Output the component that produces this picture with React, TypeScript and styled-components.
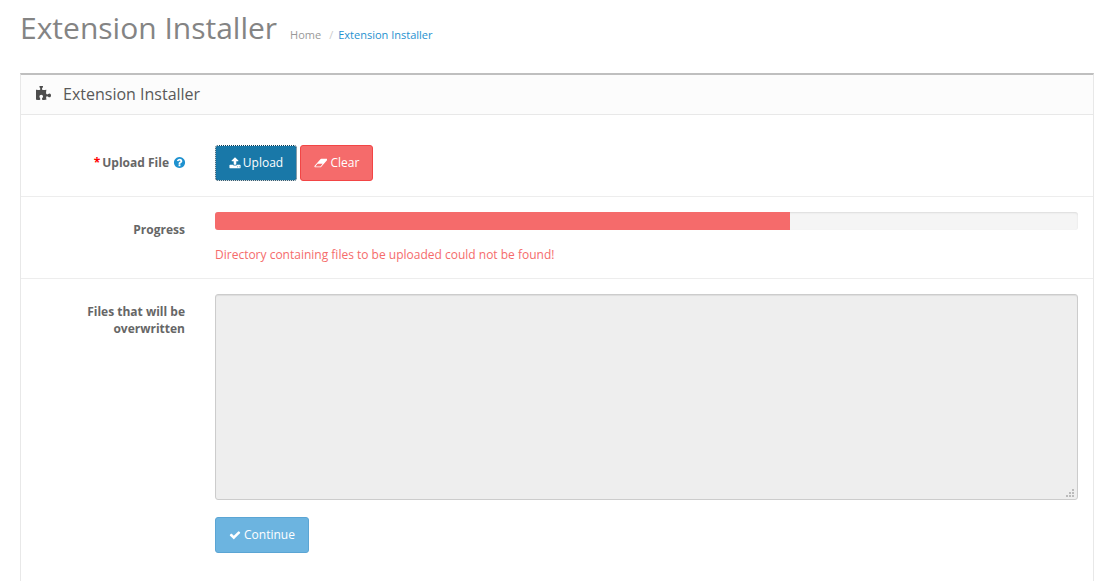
import React from "react";
import styled, { createGlobalStyle } from "styled-components";

const GlobalStyle = createGlobalStyle`
  html, body { margin: 0; padding: 0; background: #fff; overflow: hidden; }
  body {
    font-family: "Open Sans", "Liberation Sans", sans-serif;
    font-size: 12px;
    line-height: 18px;
    color: #666;
  }
`;

const Page = styled.div`
  height: 581px;
  padding: 0 15px 0 20px;
  box-sizing: border-box;
  overflow: hidden;
`;

const PageHeader = styled.div`
  display: flex;
  align-items: baseline;
  height: 73px;
  padding-top: 9px;
  box-sizing: border-box;
`;

const Title = styled.h1`
  margin: 0;
  font-size: 30px;
  line-height: 38px;
  font-weight: 400;
  color: #848484;
`;

const Crumbs = styled.ul`
  display: flex;
  list-style: none;
  margin: 0 0 0 13px;
  padding: 0;
  font-size: 11px;
`;

const Crumb = styled.li<{ $active?: boolean }>`
  color: ${(p) => (p.$active ? "#1e91cf" : "#999")};
`;

const CrumbSlash = styled.li`
  color: #ccc;
  padding: 0 5px 0 8px;
`;

const Panel = styled.section`
  border: 1px solid #e8e8e8;
  border-top: 2px solid #bfbfbf;
  border-bottom: 0;
  height: 508px;
  box-sizing: border-box;
`;

const PanelHeading = styled.div`
  display: flex;
  align-items: center;
  gap: 12px;
  height: 37px;
  padding: 0 0 2px 15px;
  background: #fcfcfc;
  border-bottom: 1px solid #e8e8e8;
`;

const PanelTitle = styled.h3`
  margin: 0;
  font-size: 16px;
  font-weight: 400;
  color: #595959;
`;

const PuzzleIcon = styled.svg`
  width: 15px;
  height: 15px;
  fill: #4d4d4d;
`;

const FormRow = styled.div<{ $top: number; $bottom: number; $divider?: boolean }>`
  display: grid;
  grid-template-columns: 164px 863px;
  column-gap: 30px;
  padding: ${(p) => `${p.$top}px 0 ${p.$bottom}px`};
  border-bottom: ${(p) => (p.$divider ? "1px solid #ededed" : "0")};
`;

const Label = styled.label<{ $pad: number }>`
  padding-top: ${(p) => p.$pad}px;
  text-align: right;
  font-weight: 700;
  line-height: 17px;
  color: #666;
`;

const Required = styled.span`
  color: #f00;
  margin-right: 2px;
`;

const HelpIcon = styled.svg`
  width: 13px;
  height: 13px;
  margin: 0 -1px 0 4px;
  fill: #1e91cf;
  vertical-align: -2px;
`;

const Buttons = styled.div`
  display: flex;
  gap: 3px;
`;

const Button = styled.button<{ $bg: string; $border: string; $wide: number }>`
  display: inline-flex;
  align-items: center;
  justify-content: center;
  gap: 3px;
  width: ${(p) => p.$wide}px;
  height: 36px;
  padding: 0;
  border-radius: 3px;
  border: 1px solid ${(p) => p.$border};
  background: ${(p) => p.$bg};
  color: #fff;
  font: 400 12px/18px "Open Sans", "Liberation Sans", sans-serif;
  & svg { height: 12px; fill: #fff; }
`;

const UploadButton = styled(Button)`
  gap: 2px;
  outline: 1px dotted #fff;
  outline-offset: -1px;
`;

const Track = styled.div`
  height: 18px;
  border-radius: 3px;
  background: #f5f5f5;
  box-shadow: inset 0 1px 2px rgba(0, 0, 0, 0.1);
  overflow: hidden;
`;

const Fill = styled.div`
  height: 100%;
  background: #f56b6b;
`;

const ErrorText = styled.div`
  margin-top: 16px;
  color: #f56b6b;
`;

const AreaWrap = styled.div`
  position: relative;
  margin-bottom: 17px;
`;

const Overwrite = styled.textarea`
  display: block;
  width: 863px;
  height: 206px;
  box-sizing: border-box;
  margin: 0;
  resize: none;
  background: #eee;
  border: 1px solid #ccc;
  border-radius: 3px;
  box-shadow: inset 0 1px 1px rgba(0, 0, 0, 0.075);
`;

const Grip = styled.svg`
  position: absolute;
  right: 3px;
  bottom: 2px;
  width: 9px;
  height: 9px;
  fill: #bbb;
`;

const PATHS = {
  puzzle:
    "M1664 1098q0 81-44.5 135t-123.5 54q-41 0-77.5-17.5t-59-38-56.5-38-71-17.5q-110 0-110 124 0 39 16 115t15 115v5q-22 0-33 1-34 3-97.5 11.5t-115.5 13.5-98 5q-61 0-103-26.5t-42-83.5q0-37 17.5-71t38-56.5 38-59 17.5-77.5q0-79-54-123.5t-135-44.5q-84 0-143 45.5t-59 127.5q0 43 15 83t33.5 64.5 33.5 53 15 50.5q0 45-46 89-37 35-117 35-95 0-245-24-9-2-27.5-4t-27.5-4l-13-2q-1 0-3-1-2 0-2-1v-1024q2 1 17.5 3.5t34 5 21.5 3.5q150 24 245 24 80 0 117-35 46-44 46-89 0-22-15-50.5t-33.5-53-33.5-64.5-15-83q0-82 59-127.5t144-45.5q80 0 134 44.5t54 123.5q0 41-17.5 77.5t-38 59-38 56.5-17.5 71q0 57 42 83.5t103 26.5q64 0 180-15t163-17v2q-1 2-3.5 17.5t-5 34-3.5 21.5q-24 150-24 245 0 80 35 117 44 46 89 46 22 0 50.5-15t53-33.5 64.5-33.5 83-15q82 0 127.5 59t45.5 143z",
  help:
    "M1024 1376v-192q0-14-9-23t-23-9h-192q-14 0-23 9t-9 23v192q0 14 9 23t23 9h192q14 0 23-9t9-23zm256-672q0-88-55.5-163t-138.5-116-170-41q-243 0-371 213-15 24 8 42l132 100q7 6 19 6 16 0 25-12 53-68 86-92 34-24 86-24 48 0 85.5 26t37.5 59q0 38-20 61t-68 45q-63 28-115.5 86.5t-52.5 125.5v36q0 14 9 23t23 9h192q14 0 23-9t9-23q0-19 21.5-49.5t54.5-49.5q32-18 49-28.5t46-35 44.5-48 28-60.5 12.5-81zm384 192q0 209-103 385.5t-279.5 279.5-385.5 103-385.5-103-279.5-279.5-103-385.5 103-385.5 279.5-279.5 385.5-103 385.5 103 279.5 279.5 103 385.5z",
  upload:
    "M1344 1472q0-26-19-45t-45-19-45 19-19 45 19 45 45 19 45-19 19-45zm256 0q0-26-19-45t-45-19-45 19-19 45 19 45 45 19 45-19 19-45zm128-224v320q0 40-28 68t-68 28h-1472q-40 0-68-28t-28-68v-320q0-40 28-68t68-28h427q21 56 70.5 92t110.5 36h256q61 0 110.5-36t70.5-92h427q40 0 68 28t28 68zm-325-648q-17 40-59 40h-256v448q0 26-19 45t-45 19h-256q-26 0-45-19t-19-45v-448h-256q-42 0-59-40-17-39 14-69l448-448q18-19 45-19t45 19l448 448q31 30 14 69z",
  eraser:
    "M960 1408l336-384h-768l-336 384h768zm1013-1077q15 34 9.5 71.5t-30.5 65.5l-896 1024q-38 44-96 44h-768q-38 0-69.5-20.5t-47.5-54.5q-15-34-9.5-71.5t30.5-65.5l896-1024q38-44 96-44h768q38 0 70 20.5t47 54.5z",
  check:
    "M1671 566q0 40-28 68l-724 724-136 136q-28 28-68 28t-68-28l-136-136-362-362q-28-28-28-68t28-68l136-136q28-28 68-28t68 28l294 295 656-657q28-28 68-28t68 28l136 136q28 28 28 68z",
};

export default function App() {
  return (
    <Page>
      <GlobalStyle />
      <PageHeader>
        <Title>Extension Installer</Title>
        <Crumbs>
          <Crumb>Home</Crumb>
          <CrumbSlash>/</CrumbSlash>
          <Crumb $active>Extension Installer</Crumb>
        </Crumbs>
      </PageHeader>
      <Panel>
        <PanelHeading>
          <PuzzleIcon viewBox="0 128 1664 1536" preserveAspectRatio="none">
            <path d={PATHS.puzzle} />
          </PuzzleIcon>
          <PanelTitle>Extension Installer</PanelTitle>
        </PanelHeading>
        <FormRow $top={30} $bottom={15} $divider>
          <Label $pad={9}>
            <Required>*</Required>Upload File
            <HelpIcon viewBox="0 0 1792 1792">
              <path d={PATHS.help} />
            </HelpIcon>
          </Label>
          <Buttons>
            <UploadButton $bg="#1978a8" $border="#0e3c55" $wide={82}>
              <svg viewBox="0 0 1792 1792"><path d={PATHS.upload} /></svg> Upload
            </UploadButton>
            <Button $bg="#f56b6b" $border="#f24545" $wide={73}>
              <svg viewBox="0 0 2048 1792"><path d={PATHS.eraser} /></svg> Clear
            </Button>
          </Buttons>
        </FormRow>
        <FormRow $top={15} $bottom={14} $divider>
          <Label $pad={9}>Progress</Label>
          <div>
            <Track>
              <Fill style={{ width: `${(575 / 863) * 100}%` }} />
            </Track>
            <ErrorText>Directory containing files to be uploaded could not be found!</ErrorText>
          </div>
        </FormRow>
        <FormRow $top={15} $bottom={15}>
          <Label $pad={9}>Files that will be overwritten</Label>
          <div>
            <AreaWrap>
              <Overwrite readOnly disabled />
              <Grip viewBox="0 0 9 9">
                <rect x="6" y="0" width="2" height="2" />
                <rect x="3" y="3" width="2" height="2" />
                <rect x="6" y="3" width="2" height="2" />
                <rect x="0" y="6" width="2" height="2" />
                <rect x="3" y="6" width="2" height="2" />
                <rect x="6" y="6" width="2" height="2" />
              </Grip>
            </AreaWrap>
            <Button $bg="#6cb4e0" $border="#5ba5d4" $wide={94}>
              <svg viewBox="0 0 1792 1792"><path d={PATHS.check} /></svg> Continue
            </Button>
          </div>
        </FormRow>
      </Panel>
    </Page>
  );
}
